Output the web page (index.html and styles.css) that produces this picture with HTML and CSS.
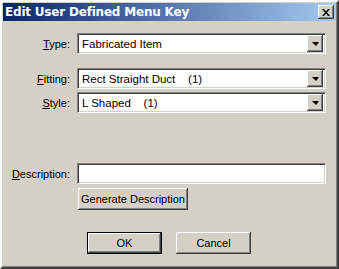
FILE: index.html
```html
<!DOCTYPE html>
<html lang="en">
<head>
  <meta charset="UTF-8" />
  <title>Edit User Defined Menu Key</title>
  <link rel="stylesheet" href="styles.css">
</head>
<body>
  <div class="window">
    <div class="titlebar">
      <span class="title">Edit User Defined Menu Key</span>
      <button class="close" aria-label="Close">
        <svg width="8" height="7" viewBox="0 0 8 7">
          <path d="M0 0h2l2 2.5L6 0h2L5 3.5 8 7H6L4 4.5 2 7H0l3-3.5z" fill="#000"/>
        </svg>
      </button>
    </div>

    <div class="form">
      <div class="row row-type">
        <label><u>T</u>ype:</label>
        <div class="combo"><span class="value">Fabricated Item</span><span class="drop"><i></i></span></div>
      </div>
      <div class="row row-fitting">
        <label><u>F</u>itting:</label>
        <div class="combo"><span class="value">Rect Straight Duct    (1)</span><span class="drop"><i></i></span></div>
      </div>
      <div class="row row-style">
        <label><u>S</u>tyle:</label>
        <div class="combo"><span class="value">L Shaped    (1)</span><span class="drop"><i></i></span></div>
      </div>
      <div class="row row-desc">
        <label><u>D</u>escription:</label>
        <div class="textbox"></div>
      </div>
      <div class="row row-gen">
        <span></span>
        <div><button class="btn gen">Generate Description</button></div>
      </div>
    </div>

    <div class="actions">
      <button class="btn default">OK</button>
      <button class="btn">Cancel</button>
    </div>
  </div>
</body>
</html>
```

FILE: styles.css
```css
* {
  box-sizing: border-box;
}
body {
  margin: 0;
  background: #d4d0c8;
  font-family: Tahoma, 'Liberation Sans', sans-serif;
  font-size: 11px;
  color: #000;
}
.window {
  width: 339px;
  height: 269px;
  padding: 1px;
  background: #d4d0c8;
  border-style: solid;
  border-width: 2px;
  border-color: #fff #404040 #404040 #fff;
  box-shadow: inset -1px -1px #808080;
}
.titlebar {
  height: 18px;
  display: flex;
  align-items: center;
  justify-content: space-between;
  padding: 0 2px 0 2px;
  background: linear-gradient(to right, #0a246a, #a6caf0);
}
.title {
  color: #fff;
  font-family: 'DejaVu Sans', sans-serif;
  font-weight: bold;
  font-size: 12px;
  letter-spacing: -0.2px;
}
.close {
  width: 16px;
  height: 14px;
  padding: 0;
  display: flex;
  align-items: center;
  justify-content: center;
  background: #d4d0c8;
  border: none;
  box-shadow: inset -1px -1px #404040, inset 1px 1px #fff, inset -2px -2px #808080;
}
.form {
  display: flex;
  flex-direction: column;
}
.row {
  display: grid;
  grid-template-columns: 67px 249px;
  column-gap: 7px;
  align-items: center;
}
.row label {
  text-align: right;
}
.row-type {
  margin-top: 12px;
}
.row-fitting {
  margin-top: 14px;
}
.row-style {
  margin-top: 3px;
}
.row-desc {
  margin-top: 50px;
}
.row-gen {
  margin-top: 4px;
}
.combo,
.textbox {
  height: 21px;
  background: #fff;
  border: 1px solid;
  border-color: #808080 #fff #fff #808080;
  box-shadow: inset 1px 1px #404040, inset -1px -1px #d4d0c8;
}
.combo {
  display: flex;
  align-items: center;
  padding: 0 2px 0 4px;
}
.combo .value {
  flex: 1;
  white-space: pre;
  font-size: 11.5px;
}
.drop {
  width: 16px;
  height: 17px;
  display: flex;
  align-items: center;
  justify-content: center;
  background: #d4d0c8;
  box-shadow: inset -1px -1px #404040, inset 1px 1px #fff, inset -2px -2px #808080;
}
.drop i {
  width: 0;
  height: 0;
  border-left: 4px solid transparent;
  border-right: 3px solid transparent;
  border-top: 4px solid #000;
  margin-top: 1px;
}
.btn {
  height: 22px;
  padding: 0;
  font-family: inherit;
  font-size: 11px;
  color: #000;
  background: #d4d0c8;
  border: none;
  box-shadow: inset -1px -1px #404040, inset 1px 1px #fff, inset -2px -2px #808080;
}
.gen {
  width: 110px;
  margin-left: 1px;
}
.actions {
  display: flex;
  gap: 14px;
  margin-top: 22px;
  padding-left: 84px;
}
.actions .btn {
  width: 75px;
  height: 22px;
}
.actions .default {
  border: 1px solid #000;
}
```
